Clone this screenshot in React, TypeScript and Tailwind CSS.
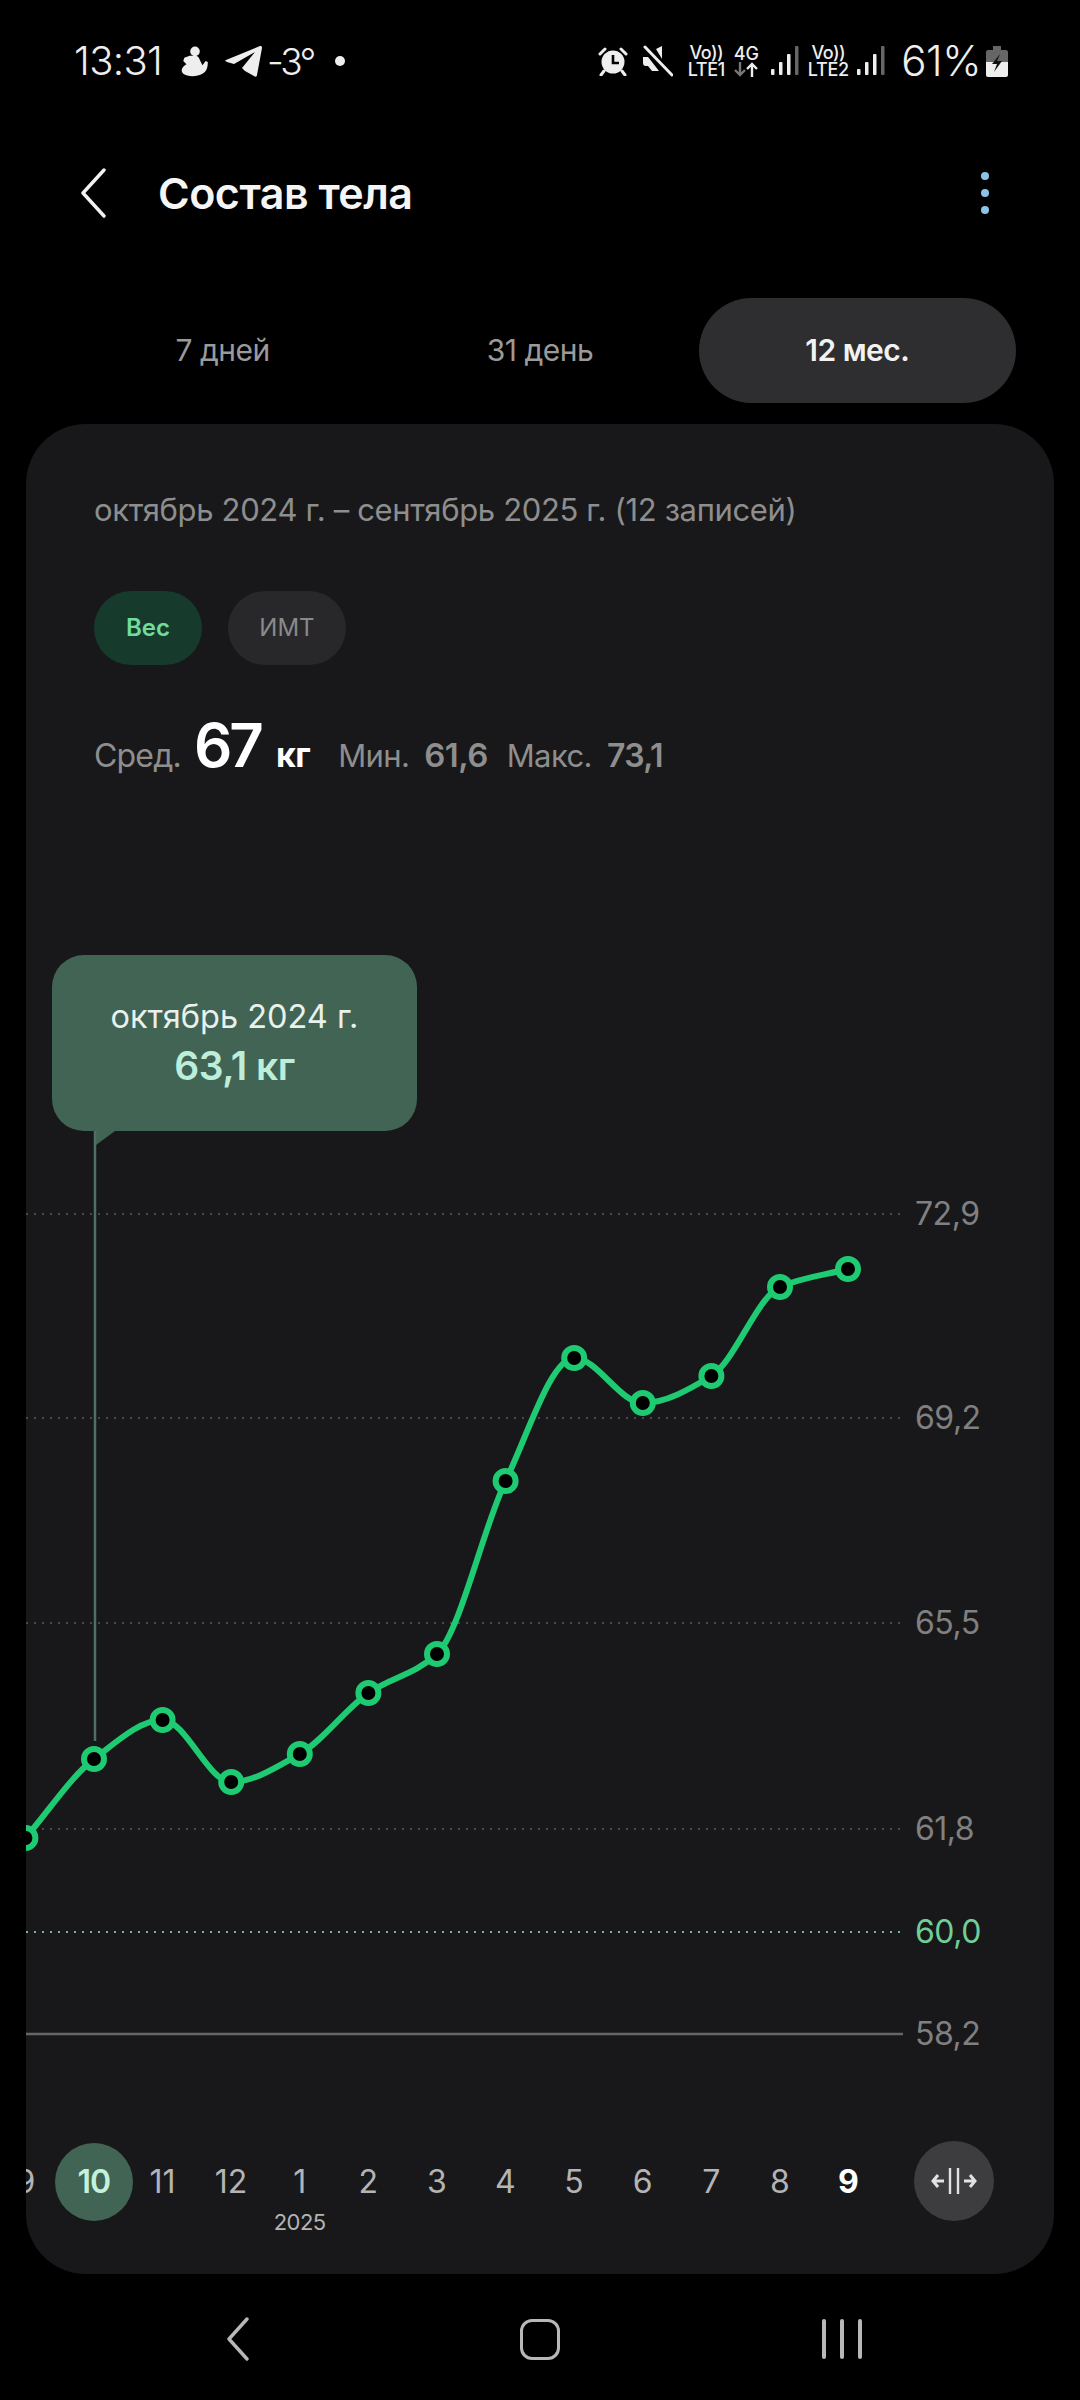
const font = '[font-family:Inter,"Noto_Sans",sans-serif]';

// page coordinates of the weight curve, one point per month
const points: [number, number][] = [
  [25.4, 1837], [94, 1758], [162.6, 1719], [231.2, 1781], [299.8, 1753], [368.4, 1692],
  [437, 1653], [505.6, 1480], [574.2, 1357], [642.8, 1402], [711.4, 1375], [780, 1286], [848, 1268],
];

const months = ['9', '10', '11', '12', '1', '2', '3', '4', '5', '6', '7', '8', '9'];

const gridLines = [
  { y: 1213, label: '72,9' },
  { y: 1417, label: '69,2' },
  { y: 1622, label: '65,5' },
  { y: 1828, label: '61,8' },
];

function monotonePath(pts: [number, number][]) {
  const n = pts.length;
  const slopes: number[] = [];
  for (let i = 0; i < n - 1; i++) {
    slopes.push((pts[i + 1][1] - pts[i][1]) / (pts[i + 1][0] - pts[i][0]));
  }
  const tangents = pts.map((_, i) => {
    if (i === 0) return slopes[0];
    if (i === n - 1) return slopes[n - 2];
    if (slopes[i - 1] * slopes[i] <= 0) return 0;
    return (2 * slopes[i - 1] * slopes[i]) / (slopes[i - 1] + slopes[i]);
  });
  let d = `M${pts[0][0]} ${pts[0][1]}`;
  for (let i = 0; i < n - 1; i++) {
    const dx = (pts[i + 1][0] - pts[i][0]) / 3;
    d += `C${pts[i][0] + dx} ${pts[i][1] + tangents[i] * dx} ${pts[i + 1][0] - dx} ${pts[i + 1][1] - tangents[i + 1] * dx} ${pts[i + 1][0]} ${pts[i + 1][1]}`;
  }
  return d;
}

function Signal() {
  return (
    <svg width="28" height="30" viewBox="0 0 28 30" className="block">
      <rect x="0" y="23" width="3.5" height="6" rx="1" fill="#eeeeee" />
      <rect x="8" y="16" width="3.5" height="13" rx="1" fill="#eeeeee" />
      <rect x="16" y="8" width="3.5" height="21" rx="1" fill="#eeeeee" />
      <rect x="24" y="0" width="3.5" height="29" rx="1" fill="#666666" />
    </svg>
  );
}

function Volte({ n }: { n: string }) {
  return (
    <div className="flex w-[40px] flex-col items-center text-[18px] leading-[17px] font-medium whitespace-nowrap text-[#eeeeee]">
      <span className="tracking-[-0.5px]">Vo))</span>
      <span className="tracking-[-0.3px]">LTE{n}</span>
    </div>
  );
}

function StatusBar() {
  return (
    <div className="flex h-[122px] items-center pl-[74px] text-[#eeeeee]">
      <span className="w-[105px] text-[40px] leading-none font-light tracking-[-0.6px]">13:31</span>
      <svg width="32" height="32" viewBox="0 0 28 30" className="block">
        <circle cx="14" cy="6" r="4.5" fill="#eeeeee" />
        <path d="M9 3 6 7M4 12l5-2h5c3 0 4 2 5 5l2 4 3-4 2 1c0 5-1 9-5 11-5 3-14 3-18 0-3-3-1-7 3-9l-3-3z" fill="#eeeeee" />
      </svg>
      <svg width="37" height="32" viewBox="0 0 37 32" className="ml-[14px] block">
        <path d="M1 15 35 1c1 0 2 0 2 2l-5 27c0 2-2 2-3 1l-9-5-3-3L30 7 9 19 2 17c-2-1-2-2-1-2z" fill="#eeeeee" />
      </svg>
      <span className="ml-[5px] text-[37px] leading-none font-light tracking-[-3px]">-3°</span>
      <span className="ml-[22px] size-[10px] rounded-full bg-[#eeeeee]" />
      <div className="ml-auto flex items-center pr-[72px]">
        <svg width="30" height="30" viewBox="0 0 30 30" className="block">
          <circle cx="15" cy="16" r="11.5" fill="#eeeeee" />
          <path d="M15 9v8h6" fill="none" stroke="#000000" strokeWidth="2.6" />
          <path d="M2 8l5-5M28 8l-5-5M6 25l-3 4M24 25l3 4" stroke="#eeeeee" strokeWidth="3" strokeLinecap="round" />
        </svg>
        <svg width="30" height="32" viewBox="0 0 30 32" className="ml-[15px] block">
          <path d="M0 12h5l4 5 7 9H9l-4-5H3c-2 0-3-1-3-3z M13 4l6-3v13z" fill="#eeeeee" />
          <path d="M2 2l27 28" stroke="#eeeeee" strokeWidth="3" strokeLinecap="round" />
        </svg>
        <div className="ml-[13px]">
          <Volte n="1" />
        </div>
        <div className="ml-[8px] flex w-[24px] flex-col items-center">
          <span className="text-[18px] leading-[17px] font-medium">4G</span>
          <svg width="24" height="15" viewBox="0 0 24 15" className="block">
            <path d="M6 0v13M1 8l5 5 5-5" fill="none" stroke="#777777" strokeWidth="2.4" />
            <path d="M18 15V2M13 7l5-5 5 5" fill="none" stroke="#eeeeee" strokeWidth="2.4" />
          </svg>
        </div>
        <div className="ml-[13px]">
          <Signal />
        </div>
        <div className="ml-[9px]">
          <Volte n="2" />
        </div>
        <div className="ml-[9px]">
          <Signal />
        </div>
        <span className="ml-[16px] text-[42px] leading-none font-light tracking-[-0.5px]">61%</span>
        <svg width="22" height="31" viewBox="0 0 22 31" className="ml-[5px] block">
          <path d="M7 0h8v4h5c1 0 2 1 2 2v10H0V6c0-1 1-2 2-2h5z" fill="#666666" />
          <path d="M0 16h22v13c0 1-1 2-2 2H2c-1 0-2-1-2-2z" fill="#eeeeee" />
          <path d="M14 8 6 18h5l-3 8 8-11h-5z" fill="#111111" />
        </svg>
      </div>
    </div>
  );
}

function Header() {
  return (
    <div className="flex h-[142px] items-center pr-[91px] pl-[80px]">
      <svg width="26" height="50" viewBox="0 0 26 50" className="block">
        <path d="M24 2 3 25l21 23" fill="none" stroke="#f2f2f2" strokeWidth="3.4" strokeLinecap="round" strokeLinejoin="round" />
      </svg>
      <h1 className="ml-[52px] text-[43px] leading-none font-semibold tracking-[-0.5px] text-[#f5f5f5]">Состав тела</h1>
      <div className="ml-auto flex flex-col gap-[9px]">
        <span className="size-[8px] rounded-full bg-[#8cc4e8]" />
        <span className="size-[8px] rounded-full bg-[#8cc4e8]" />
        <span className="size-[8px] rounded-full bg-[#8cc4e8]" />
      </div>
    </div>
  );
}

function Tabs() {
  return (
    <div className="mt-[34px] ml-[64px] grid h-[105px] w-[952px] grid-cols-3 text-[30px] tracking-[-0.5px]">
      <div className="flex items-center justify-center text-[#9a9a9a]">7 дней</div>
      <div className="flex items-center justify-center text-[#9a9a9a]">31 день</div>
      <div className="flex items-center justify-center rounded-full bg-[#2e2e30] font-semibold text-[#f2f2f2]">12 мес.</div>
    </div>
  );
}

function Chart() {
  return (
    <div className="relative mt-[160px] h-[1202px]">
      <svg width="1028" height="1202" viewBox="26 940 1028 1202" className="block">
        <path d="M94 1130h21l-19 14z" fill="#416454" />
        <path d="M95 1130v610" stroke="#4f6f62" strokeWidth="2.5" />
        {gridLines.map((g) => (
          <g key={g.label}>
            <path d={`M26 ${g.y}H903`} stroke="#48484a" strokeWidth="2" strokeDasharray="2 6" />
            <text x="915" y={g.y + 11} fontSize="32" fill="#808080" letterSpacing="-0.5">{g.label}</text>
          </g>
        ))}
        <path d="M26 1931H903" stroke="#6db89a" strokeWidth="2" strokeDasharray="2 6" />
        <text x="915" y="1942" fontSize="32" fill="#6fcf97" letterSpacing="-0.5">60,0</text>
        <path d="M26 2033H903" stroke="#666666" strokeWidth="2.5" />
        <text x="915" y="2044" fontSize="32" fill="#808080" letterSpacing="-0.5">58,2</text>
        <path d={monotonePath(points)} fill="none" stroke="#1ecb72" strokeWidth="6" />
        {points.map(([x, y]) => (
          <circle key={x} cx={x} cy={y} r="10" fill="#000000" stroke="#1ecb72" strokeWidth="6" />
        ))}
      </svg>
      <div className="absolute top-[14px] left-[26px] flex h-[176px] w-[365px] flex-col items-center justify-center rounded-[32px] bg-[#416454] pb-[3px]">
        <span className="text-[32.5px] leading-[44px] text-[#e8f1ec]">октябрь 2024 г.</span>
        <span className="mt-[5px] text-[39px] leading-[44px] font-semibold tracking-[-0.5px] text-[#bdeed9]">63,1 кг</span>
      </div>
    </div>
  );
}

function MonthAxis() {
  return (
    <div className="-ml-[35px] flex items-start">
      {months.map((m, i) => (
        <div key={i} className="flex w-[68.6px] shrink-0 flex-col items-center">
          {i === 1 ? (
            <div className="flex size-[78px] shrink-0 items-center justify-center rounded-full bg-[#416454] text-[32px] font-semibold tracking-[-1px] text-[#c4f0dc]">{m}</div>
          ) : (
            <div className={`flex h-[78px] items-center text-[32px] ${i === 12 ? 'font-bold text-white' : 'text-[#b4b4b4]'}`}>{m}</div>
          )}
          {i === 4 && <div className="-mt-[13px] text-[22px] leading-[28px] tracking-[-0.5px] whitespace-nowrap text-[#b4b4b4]">2025</div>}
        </div>
      ))}
      <div className="-mt-[2px] ml-[31px] flex size-[80px] shrink-0 items-center justify-center rounded-full bg-[#3d3d3f]">
        <svg width="46" height="30" viewBox="0 0 46 30" className="block">
          <path d="M19 2v26M27 2v26" stroke="#e2e2e2" strokeWidth="2.4" />
          <path d="M13 15H2M7 9l-5 6 5 6M33 15h11M39 9l5 6-5 6" fill="none" stroke="#e2e2e2" strokeWidth="3" />
        </svg>
      </div>
    </div>
  );
}

function StatsRow() {
  return (
    <div className="mt-[44px] flex h-[72px] items-baseline pl-[68px] text-[#8e8e8e]">
      <span className="text-[32px] tracking-[-0.8px]">Сред.</span>
      <span className="ml-[13px] text-[60px] leading-[72px] font-semibold tracking-[-3px] text-white">67</span>
      <span className="ml-[15px] text-[34px] font-bold tracking-[-0.5px] text-white">кг</span>
      <span className="ml-[28px] text-[31px] tracking-[-0.6px]">Мин.</span>
      <span className="ml-[15px] text-[33px] font-semibold tracking-[-0.6px]">61,6</span>
      <span className="ml-[19px] text-[31px] tracking-[-0.6px]">Макс.</span>
      <span className="ml-[15px] text-[32px] font-semibold tracking-[-0.6px]">73,1</span>
    </div>
  );
}

function Card() {
  return (
    <div className="mt-[21px] ml-[26px] h-[1850px] w-[1028px] overflow-hidden rounded-[60px] bg-[#18181a]">
      <div className="mt-[66px] pl-[68px] text-[31px] leading-[40px] tracking-[-0.35px] text-[#8e8e8e]">
        октябрь 2024 г. – сентябрь 2025 г. (12 записей)
      </div>
      <div className="mt-[61px] flex gap-[26px] pl-[68px] text-[24px]">
        <div className="flex h-[74px] w-[108px] items-center justify-center rounded-full bg-[#163a2b] font-semibold text-[#6fdc9b]">Вес</div>
        <div className="flex h-[74px] w-[118px] items-center justify-center rounded-full bg-[#28282a] text-[#8a8a8a]">ИМТ</div>
      </div>
      <StatsRow />
      <Chart />
      <MonthAxis />
    </div>
  );
}

function NavBar() {
  return (
    <div className="grid h-[126px] grid-cols-[302px_302px_302px] justify-center pt-[4px]">
      <div className="flex items-center justify-center">
        <svg width="24" height="44" viewBox="0 0 24 44" className="block">
          <path d="M21 2 3 22l18 20" fill="none" stroke="#b8b8b8" strokeWidth="3.4" strokeLinecap="round" strokeLinejoin="round" />
        </svg>
      </div>
      <div className="flex items-center justify-center">
        <div className="h-[41px] w-[40px] rounded-[12px] border-[3.5px] border-[#b8b8b8]" />
      </div>
      <div className="flex items-center justify-center gap-[14px]">
        <span className="h-[40px] w-[4px] rounded-full bg-[#b8b8b8]" />
        <span className="h-[40px] w-[4px] rounded-full bg-[#b8b8b8]" />
        <span className="h-[40px] w-[4px] rounded-full bg-[#b8b8b8]" />
      </div>
    </div>
  );
}

export default function App() {
  return (
    <div className={`h-[2400px] w-[1080px] overflow-hidden bg-black ${font}`}>
      <StatusBar />
      <Header />
      <Tabs />
      <Card />
      <NavBar />
    </div>
  );
}
